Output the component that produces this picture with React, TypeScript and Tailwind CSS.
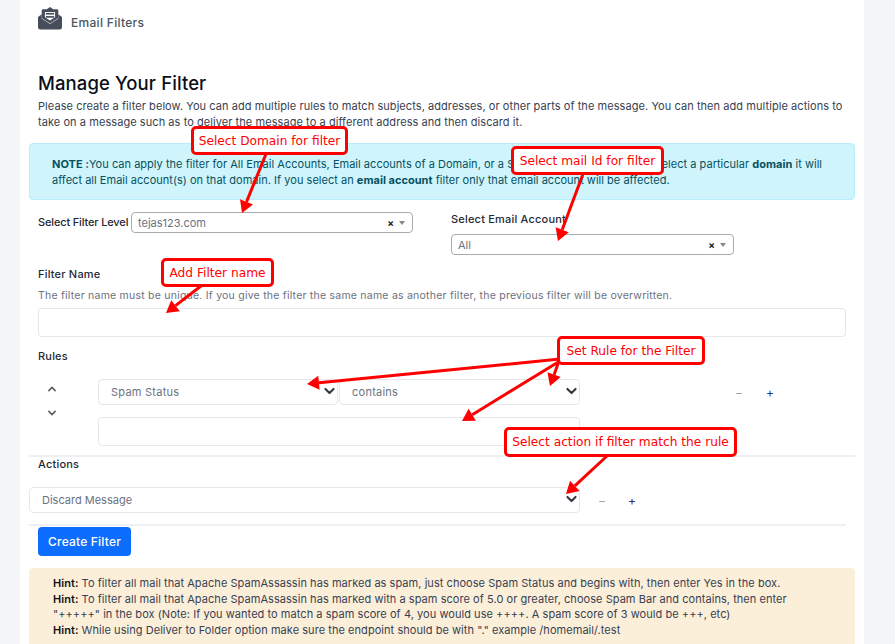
import React from "react";

function Chevron({ className, stroke = "#343a40" }: { className?: string; stroke?: string }) {
  return (
    <svg viewBox="0 0 16 16" className={className} fill="none" stroke={stroke} strokeWidth="2.6" strokeLinecap="round" strokeLinejoin="round">
      <path d="M3 5.5l5 5 5-5" />
    </svg>
  );
}

function Sel2({ value, className }: { value: string; className: string }) {
  return (
    <div className={"flex items-center justify-between h-[21px] rounded-[4px] border border-[#aaaaaa] bg-white pl-[6px] pr-[7px] " + className}>
      <span className="text-[11px] text-[#6b7280] pt-[1px]">{value}</span>
      <span className="flex items-center gap-[5px]">
        <span className="text-[10px] font-bold text-[#222] leading-none">×</span>
        <span className="w-0 h-0 border-x-[3.5px] border-x-transparent border-t-[4px] border-t-[#888]" />
      </span>
    </div>
  );
}

function NativeSelect({ value, className, track }: { value: string; className: string; track: string }) {
  return (
    <div className={"relative " + className}>
      <select className={"appearance-none w-full h-full rounded-[4px] border border-[#e5e7eb] bg-white pl-[12px] text-[11px] text-[#6b7280] outline-none " + track}>
        <option>{value}</option>
      </select>
      <Chevron className="absolute right-[2px] top-1/2 -translate-y-1/2 w-[13px] h-[13px] pointer-events-none" />
    </div>
  );
}

function Note({ className, children }: { className: string; children: React.ReactNode }) {
  return (
    <div className={"absolute flex items-center justify-center bg-white border-[3px] border-[#ff0000] rounded-[5px] text-[#ff0000] text-[12.2px] font-['DejaVu_Sans',sans-serif] whitespace-nowrap pt-[1px] " + className}>
      {children}
    </div>
  );
}

function Arrow({ x1, y1, x2, y2 }: { x1: number; y1: number; x2: number; y2: number }) {
  const a = Math.atan2(y2 - y1, x2 - x1);
  const len = 12, w = 7;
  const bx = x2 - len * Math.cos(a), by = y2 - len * Math.sin(a);
  const px = -Math.sin(a) * w, py = Math.cos(a) * w;
  return (
    <g>
      <line x1={x1} y1={y1} x2={bx} y2={by} stroke="#ff0000" strokeWidth="3" />
      <polygon points={`${x2},${y2} ${bx + px},${by + py} ${bx - px},${by - py}`} fill="#ff0000" />
    </g>
  );
}

export default function App() {
  return (
    <div className="relative h-[644px] w-[895px] overflow-hidden bg-[#f4f5f8] font-['Inter',sans-serif]">
      <div className="mx-[20px] w-[844px] h-full bg-white pl-[18px]">
        <div className="h-[45px] flex items-start gap-[9px] pt-[6px]">
          <svg viewBox="0 0 26 25" className="w-[24px] h-[24px]">
            <path d="M0 11.5 L4 8.5 V13 L13 19 L22 13 V8.5 L26 11.5 V22.5 Q26 25 23.5 25 H2.5 Q0 25 0 22.5Z" fill="#474d5a" />
            <path d="M13 0.5 L9.5 3 H5.5 Q4 3 4 4.5 V12.5 L13 18.5 L22 12.5 V4.5 Q22 3 20.5 3 H16.5 Z" fill="#474d5a" />
            <path d="M7.5 6 H18.5 V11.8 L13 15.2 L7.5 11.8Z" fill="#fff" />
            <rect x="8.5" y="7" width="9" height="1.8" fill="#474d5a" />
            <rect x="8.5" y="10.4" width="9" height="1.8" fill="#474d5a" />
          </svg>
          <span className="text-[12px] leading-[16px] font-medium text-[#4b5563] tracking-[0.3px] pt-[9px]">Email Filters</span>
        </div>

        <h1 className="mt-[26px] h-[24px] leading-[24px] text-[18.5px] font-medium text-[#0b0f19] tracking-[0.1px]">Manage Your Filter</h1>
        <p className="mt-[3px] w-[815px] text-[11px] leading-[16px] text-[#374151] tracking-[0.065px]">
          Please create a filter below. You can add multiple rules to match subjects, addresses, or other parts of the message. You can then add multiple actions to take on a message such as to deliver the message to a different address and then discard it.
        </p>

        <div className="mt-[13px] -ml-[9px] w-[826px] h-[57px] rounded-[4px] border border-[#b6effb] bg-[#cff4fc] pl-[22px] pr-[22px] pt-[12px] text-[11px] leading-[16px] text-[#055160] tracking-[0.025px]">
          <b className="font-bold">NOTE :</b>You can apply the filter for All Email Accounts, Email accounts of a Domain, or a Single Email Account. If you select a particular <b className="font-bold">domain</b> it will affect all Email account(s) on that domain. If you select an <b className="font-bold">email account</b> filter only that email account will be affected.
        </div>

        <div className="flex mt-[12px] h-[43px]">
          <div className="flex items-start">
            <span className="w-[93px] whitespace-nowrap text-[11px] font-medium text-[#1f2937] leading-[21px] tracking-[-0.15px]">Select Filter Level</span>
            <Sel2 value="tejas123.com" className="w-[282px]" />
          </div>
          <div className="ml-[38px]">
            <div className="text-[11px] font-medium text-[#1f2937] leading-[14px] tracking-[0.2px]">Select Email Account</div>
            <Sel2 value="All" className="w-[283px] mt-[8px]" />
          </div>
        </div>

        <div className="mt-[11px] text-[11px] leading-[16px] font-medium text-[#1f2937] tracking-[0.2px]">Filter Name</div>
        <p className="mt-[6px] text-[10.5px] leading-[16px] text-[#6b7280] tracking-[0.23px]">The filter name must be unique. If you give the filter the same name as another filter, the previous filter will be overwritten.</p>
        <input className="block mt-[4px] w-[808px] h-[29px] rounded-[4px] border border-[#e5e7eb] bg-white" />

        <div className="mt-[11px] text-[11px] leading-[16px] font-medium text-[#1f2937] tracking-[0.2px]">Rules</div>

        <div className="flex mt-[14px] h-[67px]">
          <div className="w-[60px] pl-[9px] pt-[6px] flex flex-col">
            <Chevron className="w-[10px] h-[10px] rotate-180" stroke="#5b6069" />
            <Chevron className="w-[10px] h-[10px] mt-[14px]" stroke="#5b6069" />
          </div>
          <div className="w-[482px]">
            <div className="flex gap-px h-[26px]">
              <NativeSelect value="Spam Status" className="w-[240px]" track="tracking-[0.25px]" />
              <NativeSelect value="contains" className="w-[241px]" track="tracking-[0.25px]" />
            </div>
            <input className="block mt-[12px] w-[482px] h-[29px] translate-y-[1px] rounded-[4px] border border-[#e5e7eb] bg-white" />
          </div>
          <div className="flex items-start pt-[7px] text-[12px] leading-[16px]">
            <span className="ml-[155px] w-[31px] text-[#9ca3af]">−</span>
            <span className="text-[#1e3a8a]">+</span>
          </div>
        </div>

        <div className="-ml-[9px] mt-[10px] w-[826px] border-t-2 border-[#eef0f4]" />
        <div className="text-[11px] leading-[14px] font-medium text-[#1f2937] tracking-[0.2px]">Actions</div>

        <div className="flex mt-[15px] -ml-[9px] h-[26px] items-center">
          <NativeSelect value="Discard Message" className="w-[551px] h-[26px]" track="tracking-[0px]" />
          <span className="ml-[18px] w-[31px] text-[12px] text-[#9ca3af] pt-[3px]">−</span>
          <span className="text-[12px] text-[#3b1f6b] -ml-px pt-[3px]">+</span>
        </div>

        <div className="-ml-[9px] mt-[12px] w-[817px] border-t-2 border-[#eef0f4]" />
        <button className="block w-[93px] h-[29px] mt-[1px] rounded-[4px] bg-[#0d6efd] text-white text-[12px] font-medium tracking-[0.2px]">Create Filter</button>

        <div className="mt-[12px] -ml-[9px] w-[826px] h-[90px] rounded-[4px] bg-[#fcefd9] pl-[24px] pt-[8px] text-[11px] leading-[15.6px] text-[#374151] tracking-[0.05px]">
          <div><b className="font-semibold text-[#111]">Hint:</b> To filter all mail that Apache SpamAssassin has marked as spam, just choose Spam Status and begins with, then enter Yes in the box.</div>
          <div className="w-[740px]"><b className="font-semibold text-[#111]">Hint:</b> To filter all mail that Apache SpamAssassin has marked with a spam score of 5.0 or greater, choose Spam Bar and contains, then enter "+++++" in the box (Note: If you wanted to match a spam score of 4, you would use ++++. A spam score of 3 would be +++, etc)</div>
          <div><b className="font-semibold text-[#111]">Hint:</b> While using Deliver to Folder option make sure the endpoint should be with "." example /homemail/.test</div>
        </div>
      </div>

      <svg className="absolute inset-0 pointer-events-none" width="895" height="644">
        <Arrow x1={266} y1={154} x2={242} y2={213} />
        <Arrow x1={583} y1={174} x2={558} y2={241} />
        <Arrow x1={201} y1={286} x2={166} y2={313} />
        <Arrow x1={560} y1={359} x2={307} y2={384} />
        <Arrow x1={559} y1={361} x2={550} y2={386} />
        <Arrow x1={560} y1={361} x2={462} y2={421} />
        <Arrow x1={607} y1={456} x2={566} y2={494} />
      </svg>
      <Note className="left-[191px] top-[126px] w-[157px] h-[29px]">Select Domain for filter</Note>
      <Note className="left-[511px] top-[146px] w-[153px] h-[29px]">Select mail Id for filter</Note>
      <Note className="left-[161px] top-[258px] w-[113px] h-[29px]">Add Filter name</Note>
      <Note className="left-[557px] top-[336px] w-[148px] h-[29px]">Set Rule for the Filter</Note>
      <Note className="left-[504px] top-[427px] w-[233px] h-[30px]">Select action if filter match the rule</Note>
    </div>
  );
}
